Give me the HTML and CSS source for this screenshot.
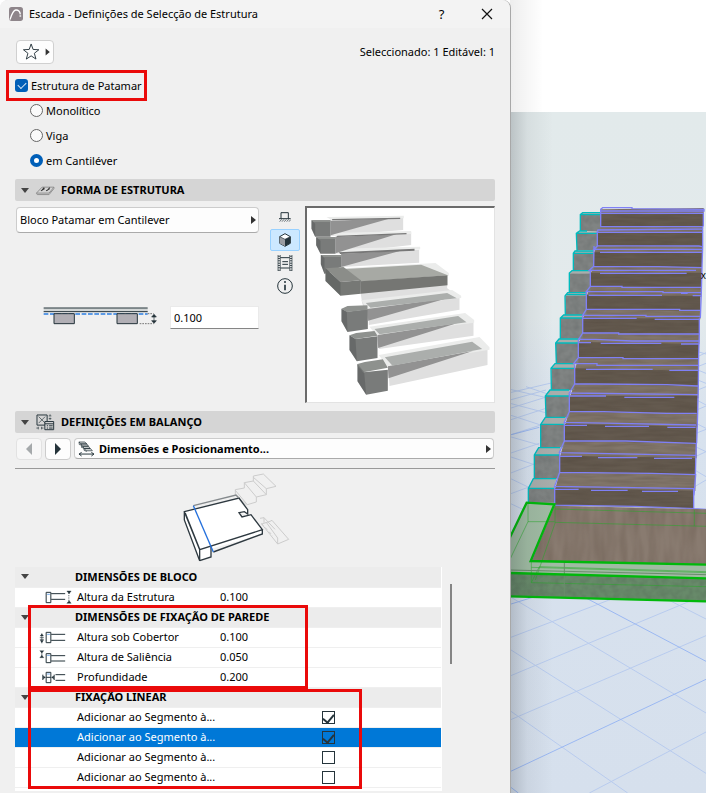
FILE: index.html
```html
<!DOCTYPE html>
<html lang="pt">
<head>
<meta charset="utf-8">
<title>Escada - Definições de Selecção de Estrutura</title>
<link rel="stylesheet" href="styles.css">
</head>
<body>
<main class="dialog">
  <header class="titlebar">
    <svg class="app-icon" viewBox="0 0 42 42"><rect width="42" height="42" rx="8" fill="#8e858a"/><path d="M3 38C7 25 12 10 20 9c8-1 13 5 14 13" fill="none" stroke="#fff" stroke-width="4"/><path d="M34 25v4" stroke="#fff" stroke-width="5"/></svg>
    <h1>Escada - Definições de Selecção de Estrutura</h1>
    <button class="win-btn" type="button" aria-label="Ajuda">?</button>
    <button class="win-btn" type="button" aria-label="Fechar"><svg viewBox="0 0 12 12" width="12" height="12"><path d="M1 1l10 10M11 1L1 11" stroke="#111" stroke-width="1.2"/></svg></button>
  </header>

  <div class="content">
    <div class="toolbar">
      <button class="fav" type="button" aria-label="Favoritos">
        <svg viewBox="0 0 112 66" width="36" height="22"><path d="M44 8l6 17 18 1-14 11 5 18-15-10-15 10 5-18-14-11 18-1z" fill="none" stroke="#2b3840" stroke-width="3" stroke-linejoin="round"/><path d="M89 22l13 11-13 11z" fill="#333"/></svg>
      </button>
      <span>Seleccionado: 1 Editável: 1</span>
    </div>

    <fieldset class="structure">
      <label class="choice marked"><input type="checkbox" checked>Estrutura de Patamar</label>
      <label class="choice sub"><input type="radio" name="tipo">Monolítico</label>
      <label class="choice sub"><input type="radio" name="tipo">Viga</label>
      <label class="choice sub"><input type="radio" name="tipo" checked>em Cantiléver</label>
    </fieldset>

    <h2 class="section">
      <i class="caret"></i>
      <svg viewBox="0 0 54 30"><path d="M4 22L19 6h32L38 22zM4 22l2 4h32l13-16V6" fill="none" stroke="#8b8b8b" stroke-width="2.5"/><path d="M16 16l10-6M30 16l10-6M19 14l6-7m8 8 7-8" stroke="#333" stroke-width="3"/></svg>
      FORMA DE ESTRUTURA
    </h2>

    <div class="form-area">
      <div class="form-left">
        <div class="picker">
          <select aria-label="Forma"><option>Bloco Patamar em Cantilever</option></select>
          <svg class="arrow" viewBox="0 0 5 8"><path d="M0 0l5 4-5 4z" fill="#333"/></svg>
        </div>
        <label class="thickness">
          <svg viewBox="130 395 345 60" width="115" height="20"><rect x="132" y="401" width="312" height="12" fill="#d2d6d6"/><path d="M132 401h312M132 412h312" stroke="#25343b" stroke-width="3"/><path d="M132 419h312" stroke="#2b7de1" stroke-width="4" stroke-dasharray="14 5"/><path d="M163 418h61v30h-61zM352 418h61v30h-61z" fill="#b1afb5" stroke="#25343b" stroke-width="3"/><path d="M444 418h18M420 448h42" stroke="#777" stroke-width="3" stroke-dasharray="5 3"/><path d="M463 422v22M456 428l7-8 7 8zM456 439l7 8 7-8z" fill="#25343b" stroke="#25343b" stroke-width="2"/></svg>
          <input type="text" value="0.100">
        </label>
      </div>
      <div class="views">
        <button type="button" aria-label="Planta"><svg viewBox="0 0 36 30" width="12" height="10"><path d="M6 20V2h22v18M0 20h35" fill="none" stroke="#25343b" stroke-width="3"/><path d="M2 29l6-7m1 7l6-7m1 7l6-7m1 7l6-7m1 7l5-6" stroke="#25343b" stroke-width="2"/></svg></button>
        <button class="on" type="button" aria-label="Vista 3D"><svg viewBox="0 0 36 42" width="12" height="14"><path d="M18 2l16 9v20L18 40 2 31V11z" fill="#fff" stroke="#25343b" stroke-width="3"/><path d="M2 11l16 8v21L2 31z" fill="#9b9da2"/><path d="M18 19l16-8v20l-16 9z" fill="#25343b"/><path d="M2 11l16 8 16-8" fill="none" stroke="#25343b" stroke-width="2"/></svg></button>
        <button type="button" aria-label="Animação"><svg viewBox="0 0 48 48" width="16" height="16"><path d="M3 0v48M10 0v48M38 0v48M45 0v48" stroke="#25343b" stroke-width="2"/><path d="M6 2v46M42 2v46" stroke="#25343b" stroke-width="5" stroke-dasharray="3 4"/><path d="M10 8h28M10 39h28M16 20h17M16 28h17" stroke="#25343b" stroke-width="3"/></svg></button>
        <button type="button" aria-label="Informação"><svg viewBox="0 0 48 48" width="16" height="16"><circle cx="24" cy="24" r="22" fill="none" stroke="#25343b" stroke-width="3"/><path d="M24 20v17" stroke="#25343b" stroke-width="5"/><circle cx="24" cy="12" r="3" fill="#25343b"/></svg></button>
      </div>
      <div class="preview">
        <svg viewBox="156 99 558 582" role="img" aria-label="Pré-visualização da escada">
          <path fill="#dfdfdf" d="M225 133L443 128V165L225 183zM240 182L467 172V210L240 236zM257 236L491 224V263L257 276zM315 352L575 329V340L612 366V404L338 437L320 385zM340 408L612 368V404L340 450zM368 482L654 439V482L370 522zM398 574L696 522V570L402 633z"/>
          <path fill="#ebeceb" d="M213 126L445 122V130L228 135zM228 174L467 168V177L242 185zM243 221L494 215V223L258 237zM262 280L540 264L580 294V302L315 320zM317 376L590 345L617 362V369L334 402zM342 455L629 414L656 435V443L362 480zM370 540L672 486L702 517V524L394 574z"/>
          <path fill="#929292" d="M225 138L406 130L225 181zM240 186L422 178L240 235zM257 237L436 227L257 276zM336 402L575 370L338 437zM366 480L606 444L368 519zM397 574L652 528L399 610z"/>
          <path fill="#abaeac" d="M331 384L575 354L604 370L345 398zM357 462L608 423L633 442L372 478zM388 547L650 500L680 522L411 572z"/>
          <path fill="#777" d="M230 132l204-4v4l-204 4zM246 182l207-8v4l-211 8zM250 232l227-11v6l-223 10z"/>
          <path fill="#a7a9a4" d="M268 282L497 269 577 301 316 320z"/>
          <path fill="#757673" d="M315 319L576 301V331L316 356z"/>
          <path fill="#797b7a" d="M168 136h57v49h-46l-11-24zM182 187h58v49h-45l-13-25zM196 240h61v35l-50 22-11-29zM258 401l16 9 63-7v59l-61 9-18-32zM282 481l18 11 66-8v65l-62 10-22-34zM306 567l18 25 73-8v63l-65 12-26-40z"/>
          <path fill="#8e918e" d="M168 136h57l-2 5h-50zM182 187h58v5h-51zM196 240h61v6h-52zM258 401l18-8 60-2v13l-62 7zM282 481l20-7 55-6 9 14-66 10zM306 567l22-6 54-8 15 25-73 14-18-18z"/>
          <path fill="#8b8d89" d="M210 280L264 276 316 316 255 321z"/>
          <path fill="#767875" d="M210 280L255 321V362L210 318zM255 321L316 316V356L255 362z"/>
          <path fill="#4e5150" opacity=".4" d="M168 136l11 10v39l-11-24zM182 187l13 10v39l-13-25zM196 240l11 10v47l-11-29zM258 401l16 9 2 61-18-32zM282 481l18 11 4 67-22-34zM306 567l20 24 6 68-26-40zM210 280l45 41v41l-45-44z"/>
        </svg>
      </div>
    </div>

    <h2 class="section">
      <i class="caret"></i>
      <svg viewBox="106 40 57 52" fill="none" stroke="#25343b" stroke-width="3"><path d="M134 74h-24V43h31v20M134 63h27v25h-27zM134 70h27"/><path d="M115 48l20 20m0-20l-20 20" stroke-width="2"/><path d="M140 76h4m3 0h11m-18 7h4m3 0h11"/><path d="M150 41v5m0 5v7m-4-12h8m-8 8h8M108 83h6m10 0h6m-16-4v8m10-8v8" stroke-width="2"/></svg>
      DEFINIÇÕES EM BALANÇO
    </h2>

    <div class="pager">
      <button class="off" type="button" disabled aria-label="Anterior"><svg viewBox="0 0 6 12" width="6" height="12"><path d="M6 0v12L0 6z" fill="#a5a9ab"/></svg></button>
      <button type="button" aria-label="Seguinte"><svg viewBox="0 0 6 12" width="6" height="12"><path d="M0 0v12l6-6z" fill="#25343b"/></svg></button>
      <div class="picker page">
        <select aria-label="Página"><option>Dimensões e Posicionamento...</option></select>
        <svg class="lead" viewBox="236 123 50 52"><path d="M240 166h42M246 161l-8 5 8 6M276 161l8 5-8 6" fill="none" stroke="#25343b" stroke-width="3"/><path d="M238 129h18l6 6h-18zM244 135h18l5 7h-18zM249 142h18l5 7h-18zM254 149h19l6 7h-19zM238 129l1 8 6 1 1 8 6 1 2 8 8 3" fill="#c9cdcf" stroke="#25343b" stroke-width="2"/></svg>
        <svg class="arrow" viewBox="0 0 5 8"><path d="M0 0l5 4-5 4z" fill="#333"/></svg>
      </div>
    </div>

    <div class="figure">
      <svg viewBox="543 210 333 291" width="111" height="97" role="img" aria-label="Bloco de patamar">
        <g fill="none" stroke="#ccc" stroke-width="3"><path d="M706 285v-16l27-5v-16l27-5v-15l30-6 38 37-29 7-39-34M799 266v18l-30 7-36-43M799 284l-39-41M769 291v15l-27 8-36-43M706 285l34 30M780 355l12-2 33 35M792 353v15M810 364l6-3 50 57-33 14-48-60 25-8M833 432v-18l-35-48"/><path d="M784 370l35 38" stroke-dasharray="9 8"/></g>
        <path d="M553 335L710 293 742 331 738 344 722 338 718 343 727 351 752 343 788 388V402L634 446V470L600 481 554 361z" fill="#fff"/>
        <g fill="none" stroke="#2e3940" stroke-width="4"><path d="M553 335L717 294 743 329V342L733 335 717 338 726 351 753 344 787 389 599 449zM553 335v25l46 122v-33M599 482l34-11v-31M787 389v13L640 456M556 340l43 108"/></g>
        <path d="M580 317L708 285l9 9" fill="none" stroke="#858a8d" stroke-width="4"/>
        <path d="M580 317L640 456" stroke="#2470dc" stroke-width="4"/>
      </svg>
    </div>

    <div class="params">
      <div class="list">
        <table>
          <colgroup><col class="c-icon"><col class="c-name"><col></colgroup>
          <tbody>
            <tr class="group"><td><i class="caret"></i></td><th colspan="2">DIMENSÕES DE BLOCO</th></tr>
            <tr><td class="ico"><svg viewBox="134 0 80 42"><path d="M137 7h14v31h-14zM152 11h42M152 28h42" fill="none" stroke="#25343b" stroke-width="3"/><path d="M140 13h8" stroke="#2b7de1" stroke-width="2"/><path d="M205 8v28" stroke="#25343b" stroke-width="2" stroke-dasharray="4 3"/><path d="M199 3h13l-6 8zM199 40h13l-6-8z" fill="#25343b" stroke="#25343b"/></svg></td><td>Altura da Estrutura</td><td>0.100</td></tr>
          </tbody>
          <tbody>
            <tr class="group"><td><i class="caret"></i></td><th colspan="2">DIMENSÕES DE FIXAÇÃO DE PAREDE</th></tr>
            <tr><td class="ico"><svg viewBox="116 0 80 42"><path d="M137 7h14v31h-14zM152 13h42M152 31h42" fill="none" stroke="#25343b" stroke-width="3"/><path d="M140 13h8" stroke="#2b7de1" stroke-width="2"/><path d="M118 22h12M118 28h12M124 10v30" stroke="#25343b" stroke-width="2"/><path d="M118 18h12l-6-7zM118 31h12l-6 7z" fill="#25343b"/></svg></td><td>Altura sob Cobertor</td><td>0.100</td></tr>
            <tr><td class="ico"><svg viewBox="116 0 80 42"><path d="M137 11h14v27h-14zM152 17h42M152 33h42" fill="none" stroke="#25343b" stroke-width="3"/><path d="M140 16h8" stroke="#2b7de1" stroke-width="2"/><path d="M118 2h12l-6 7zM118 23h12l-6-7z" fill="#25343b" stroke="#25343b"/><path d="M124 5v16" stroke="#25343b" stroke-width="2"/></svg></td><td>Altura de Saliência</td><td>0.050</td></tr>
            <tr><td class="ico"><svg viewBox="116 0 80 42"><path d="M137 7h14v31h-14zM165 14h29M165 31h29M137 22h14" fill="none" stroke="#25343b" stroke-width="3"/><path d="M140 12h8" stroke="#2b7de1" stroke-width="2"/><path d="M127 14v16M161 14v16" stroke="#25343b" stroke-width="3"/><path d="M128 17v11l8-6zM160 17v11l-8-6z" fill="#25343b"/></svg></td><td>Profundidade</td><td>0.200</td></tr>
          </tbody>
          <tbody>
            <tr class="group"><td><i class="caret"></i></td><th colspan="2">FIXAÇÃO LINEAR</th></tr>
            <tr><td></td><td><label for="s1">Adicionar ao Segmento à...</label></td><td class="chk"><input id="s1" type="checkbox" checked></td></tr>
            <tr class="selected"><td></td><td><label for="s2">Adicionar ao Segmento à...</label></td><td class="chk"><input id="s2" type="checkbox" checked></td></tr>
            <tr><td></td><td><label for="s3">Adicionar ao Segmento à...</label></td><td class="chk"><input id="s3" type="checkbox"></td></tr>
            <tr><td></td><td><label for="s4">Adicionar ao Segmento à...</label></td><td class="chk"><input id="s4" type="checkbox"></td></tr>
          </tbody>
        </table>
        <div class="mark mark-wall"></div>
        <div class="mark mark-linear"></div>
      </div>
      <div class="scroll"></div>
    </div>
  </div>
</main>

<aside class="viewport">
  <svg viewBox="12 -570 588 2379" preserveAspectRatio="xMinYMin slice" role="img" aria-label="Vista 3D da escada">
    <defs>
      <linearGradient id="ground" x1="0" y1="0" x2="0" y2="1"><stop offset="0" stop-color="#e2eaeb"/><stop offset=".3" stop-color="#e3eaec"/><stop offset=".45" stop-color="#d8e2ee"/><stop offset="1" stop-color="#d6e0ed"/></linearGradient>
      <linearGradient id="shade"><stop offset="0" stop-color="#1a2028" stop-opacity=".2"/><stop offset=".4" stop-color="#1a2028" stop-opacity=".06"/><stop offset="1" stop-color="#1a2028" stop-opacity="0"/></linearGradient>
      <linearGradient id="shade-top"><stop offset="0" stop-opacity=".07"/><stop offset="1" stop-opacity="0"/></linearGradient>
      <filter id="grain" x="0" y="0" width="1" height="1" color-interpolation-filters="sRGB"><feTurbulence type="fractalNoise" baseFrequency=".012 .1" numOctaves="2" seed="4"/><feColorMatrix values="0 0 0 0 .25  0 0 0 0 .21  0 0 0 0 .17  .4 0 0 0 -.12"/><feComposite in2="SourceGraphic" operator="in"/><feMerge><feMergeNode in="SourceGraphic"/><feMergeNode/></feMerge></filter>
      <filter id="planks" x="0" y="0" width="1" height="1" color-interpolation-filters="sRGB"><feTurbulence type="fractalNoise" baseFrequency=".04 .008" numOctaves="2" seed="2"/><feColorMatrix values="0 0 0 0 .28  0 0 0 0 .22  0 0 0 0 .17  .4 0 0 0 -.12"/><feComposite in2="SourceGraphic" operator="in"/><feMerge><feMergeNode in="SourceGraphic"/><feMergeNode/></feMerge></filter>
      <filter id="stone" x="0" y="0" width="1" height="1" color-interpolation-filters="sRGB"><feTurbulence type="fractalNoise" baseFrequency=".05" numOctaves="2" seed="8"/><feColorMatrix values="0 0 0 0 .2  0 0 0 0 .22  0 0 0 0 .22  .3 0 0 0 -.1"/><feComposite in2="SourceGraphic" operator="in"/><feMerge><feMergeNode in="SourceGraphic"/><feMergeNode/></feMerge></filter>
    </defs>
    <rect x="12" y="-570" width="588" height="336" fill="#fff"/>
    <rect x="12" y="-234" width="588" height="2050" fill="url(#ground)"/>
    <g fill="none" stroke="#b8cbee" stroke-width="3">
      <path d="M12 608L140 578M12 630L120 600M12 598L130 625M12 655L118 622M60 590L125 612M12 690L120 655M12 640L118 668M12 735L120 700M12 675L104 705M12 790L100 760M12 740L100 765M12 850L95 818M12 800L88 825M12 912L85 885M12 865L85 900M12 940L65 965M575 485L600 492M575 500L600 488M575 530L600 520M575 540L600 550M575 600L600 590M575 570L600 580M572 660L600 648M572 630L600 645M570 730L600 718M570 700L600 715M568 800L600 785M568 770L600 785M566 890L600 870M566 840L600 860"/>
      <path d="M12 1343L320 1226M12 1458L560 1230M12 1590L600 1337M250 1809L600 1626M12 1220L600 1569M12 1378L600 1750M12 1562L365 1809M480 1226L600 1287"/>
    </g>
    <path d="M12 1745L600 1468M240 1224L600 1414M12 1243L80 1222M12 1790l25 19M12 735L100 712" fill="none" stroke="#9bb8f2" stroke-width="3"/>

    <path filter="url(#grain)" fill="#82766a" d="M284 58L593 54V70H284zM284 109L590 108V130H274zM275 166L590 168V190H263zM263 228L588 231V253H253zM253 288L586 290V320H241zM241 357L583 360V388H230zM230 428L580 431V462H217zM217 502L579 506V542H206zM206 581L577 586V625H190zM190 664L575 668V712H175zM175 752L572 758V805H161zM161 846L568 851V903H146z"/>
    <path filter="url(#grain)" fill="#645a4f" d="M284 70L592 69V109L284 110zM274 127L590 127V169L274 167zM263 187L588 187V232L263 229zM253 248L586 248V292L253 290zM241 315L583 318V362L241 358zM230 383L580 386V433L230 429zM217 456L579 462V508L217 503zM206 535L577 542V588L206 582zM190 618L575 618V670L190 665zM175 702L572 710V760L175 753zM161 797L568 804V853L161 847zM146 893L564 902V955L146 946z"/>
    <path filter="url(#stone)" fill="#808483" d="M223 74h61v49h-61zM213 130h61v51h-61zM202 190h61v51h-61zM190 250h63v57h-63zM178 316h63v59h-63zM163 384h67v62h-67zM150 459h67v61h-67zM136 535h69v65h-69zM120 618h70v64h-70zM104 703h71v69h-71zM85 795h75v71h-75zM67 895h78v45h-78z"/>
    <path fill="#a9adab" d="M223 74l6-6h55v6zM213 130v-5l60-2v7zM202 190l4-8h57v8zM190 250l6-8h57v8zM176 318l8-10h57v8zM163 384l9-10h58v10zM150 459l8-12h59v12zM136 535l10-14h62v14zM118 618l12-18h61v18zM104 703l13-21h63l-5 21zM85 795l13-22h66l-4 22zM67 895l14-29h70l-6 29z"/>
    <path fill="none" stroke="#00babd" stroke-width="4" d="M284 68h-54l-7 6v49M284 74h-61M243 123h-22l-10 7 2 51M213 130h61M263 183h-56l-5 7v51M263 190h-60M253 242h-55l-8 7v58M241 308h-56l-8 10 1 57M178 314h63M230 375h-57l-10 9v62M163 384h67M217 447h-58l-10 12 2 61M150 459h67M205 521h-58l-12 14 1 65M136 535h69M190 600h-58l-14 18 2 64M118 618h72M178 682h-60l-14 21v69M104 703h71M163 773h-65l-13 22v71M85 795h76M150 866h-68l-15 29v45M67 895h79"/>
    <path fill="none" stroke="#7f80f5" stroke-width="4" d="M284 110V58l6-5h88v3l216 2v5H284M284 70h308v39M284 110h306v7l-314 3-3 7h316M274 127v40l305 1 9 2M264 168l-1 61M590 110v60l-2 62M275 167l-11 11h324M282 187h305M263 229l193 1 132 3M263 229l-13 12h320M253 241v48M588 232l-2 76M282 250h260M253 289h95v3h238M253 289l-12 16h230v3h115M241 305v53M586 308l-3 76M248 316h220M525 310h20M560 317h24M241 358h280v3h62M241 358l-11 18h190v3h162M230 376v53M580 385v48l-2 60M230 385h162M446 388h134M230 429h108v3h240M230 429l-12 19h50l110 5h200M217 450v54M284 460h182M217 458h38M525 462h54M217 503h134v3h226M578 493l-1 95M217 503l-14 18h70v5h304M206 525v57M240 538h200M490 541h87M206 582h64l213 2 92 4M577 588l-2 82M206 582l-16 27 385 5M190 609v56M190 618h110M355 622h150M190 665h102l190 5h90M575 670l-3 90M190 665l-15 32 160 3 235 5M175 697v56M175 706h68M297 709h132M484 712h85M175 753h185l209 7M571 760l-3 95M175 753l-15 35 410 8M161 788v59M161 799h67M276 803h118M444 805h114M161 847l276 3 132 4-5 62M161 847l-15 42 420 7M146 889v57M146 898h72M255 901h110M408 904h108M146 946h60l180 3 178 7 36 2M563 896v60"/>
    <text class="cursor-x" x="584" y="268">x</text>

    <path filter="url(#planks)" fill="#897b70" d="M146 947L600 958V1123L76 1112z"/>
    <path fill="#a0bba3" d="M62 938h83L76 1112 600 1123V1166L12 1150V1042z"/>
    <path filter="url(#stone)" fill="#688a6a" d="M12 1149L600 1166V1233L12 1218z"/>
    <path fill="none" stroke="#28a82a" stroke-width="2" opacity=".8" d="M147 957L600 970M147 997L600 1009M147 940v60L88 1170M66 938v57h80M12 1108L66 995M565 960v48M76 1112v66L600 1190M76 1178L100 1130 600 1145M76 1132L600 1148"/>
    <path fill="none" stroke="#698c6b" stroke-width="3" d="M12 1140L600 1154M175 1115v104"/>
    <path d="M145 942L78 1110" stroke="#7380ee" stroke-width="3" stroke-dasharray="5 4"/>
    <path fill="none" stroke="#00b80b" stroke-width="7" d="M12 1042L62 938 145 943 74 1113 600 1124M12 1149L600 1165M12 1219L600 1234"/>
    <rect x="12" y="-234" width="130" height="2050" fill="url(#shade)"/>
    <rect x="12" y="-570" width="100" height="336" fill="url(#shade-top)"/>
  </svg>
</aside>
</body>
</html>
```
FILE: styles.css
```css
* { box-sizing: border-box; }

body {
  margin: 0;
  display: grid;
  grid-template-columns: minmax(0, 1fr) 196px;
  min-height: 100vh;
  background: #fff;
  color: #000;
  font: 11px/16px "Noto Sans", "Open Sans", sans-serif;
}

button, input, select { font: inherit; color: inherit; margin: 0; padding: 0; }
svg { display: block; }

.dialog {
  background: #f0f0f0;
  border-radius: 8px 8px 0 0;
  box-shadow: 1px 0 0 #a8a8a8;
  z-index: 1;
}

.titlebar {
  display: flex;
  align-items: center;
  height: 28px;
  padding: 0 1px 0 9px;
  background: #f3f3f3;
  border-radius: 8px 8px 0 0;
}
.app-icon { width: 14px; height: 14px; margin-right: 6px; }
.titlebar h1 {
  flex: 1;
  margin: 0;
  font-size: 11px;
  font-weight: 400;
}
.win-btn {
  display: grid;
  place-items: center;
  width: 45px;
  height: 28px;
  border: 0;
  background: none;
  font-size: 13px;
}

.content { padding: 12px 15px 0; }

.toolbar { display: flex; justify-content: space-between; align-items: center; }
.fav {
  height: 24px;
  padding: 0;
  margin-left: 1px;
  background: #fdfdfd;
  border: 1px solid #d0d0d0;
  border-radius: 4px;
}

.structure {
  display: flex;
  flex-direction: column;
  align-items: flex-start;
  margin: 6px 0 6px -9px;
  padding: 0;
  border: 0;
}
.choice { display: flex; align-items: center; gap: 3px; height: 25px; }
.choice input {
  appearance: none;
  width: 13px;
  height: 13px;
  border: 1px solid #666;
  border-radius: 50%;
  background: #fafafa;
}
.choice.sub { padding-left: 24px; }
.choice.marked {
  height: 31px;
  margin-bottom: -3px;
  padding: 0 2px 0 6px;
  border: 3px solid #ea0a0a;
}
.choice.marked input {
  border: 0;
  border-radius: 3px;
  background: #005fb8;
  display: grid;
  place-items: center;
}
.choice.marked input::after {
  content: "";
  width: 7px;
  height: 4px;
  margin-bottom: 2px;
  border: solid #d8e8f6;
  border-width: 0 0 1px 1px;
  transform: rotate(-45deg);
}
.choice.sub input:checked { border: 4px solid #005fb8; background: #fff; }

.section {
  display: flex;
  align-items: center;
  gap: 6px;
  height: 22px;
  margin: 0 0 5px;
  padding: 0 6px;
  background: #d5d5d5;
  border-radius: 2px;
  font-size: 11px;
  line-height: 16px;
}
.section svg { width: 20px; height: 17px; }
.caret {
  display: block;
  flex: none;
  width: 0;
  border: 4px solid transparent;
  border-top: 5px solid #444;
  border-bottom: 0;
}

.form-area { display: flex; gap: 11px; align-items: flex-start; margin-bottom: 8px; }
.form-left { flex: 1; padding: 1px 0 0 1px; }
.picker { position: relative; flex: 1; }
.picker select {
  display: block;
  appearance: none;
  width: 100%;
  height: 26px;
  padding: 0 14px 0 3px;
  background: #fdfdfd;
  border: 1px solid #ccc;
  border-bottom-color: #aaa;
  border-radius: 4px;
}
.arrow { position: absolute; right: 3px; top: 50%; width: 5px; height: 8px; margin-top: -4px; }

.thickness { display: flex; justify-content: space-between; padding-left: 27px; margin-top: 73px; }
.thickness input {
  width: 89px;
  height: 23px;
  padding: 0 3px;
  background: #fff;
  border: 1px solid #eaeaea;
  border-bottom-color: #858585;
}

.views { display: flex; flex-direction: column; width: 30px; gap: 1px; }
.views button {
  display: grid;
  place-items: center;
  height: 22px;
  border: 1px solid transparent;
  border-radius: 2px;
  background: none;
}
.views .on { background: #cce8ff; border-color: #99d1ff; }

.preview {
  flex: 0 0 190px;
  margin-left: -6px;
  border: solid #6b6b6b;
  border-width: 2px 1px 1px 2px;
  border-right-color: #e3e3e3;
  border-bottom-color: #e3e3e3;
  background: #fff;
}
.preview svg { width: 100%; height: 194px; }

.pager { display: flex; gap: 3px; padding: 0 1px 8px; border-bottom: 1px solid #999; }
.pager button {
  display: grid;
  place-items: center;
  width: 26px;
  height: 22px;
  background: #fdfdfd;
  border: 1px solid #ccc;
  border-radius: 4px;
}
.pager .off { background: #f7f7f7; border-color: #e2e2e2; }
.page select { height: 21px; padding-left: 24px; font-weight: 700; }
.lead { position: absolute; left: 4px; top: 2px; width: 17px; height: 17px; }

.figure { display: flex; justify-content: center; padding: 1px 38px 0 0; }

.params { display: flex; gap: 8px; }
.list { position: relative; flex: 1; background: #fff; padding: 0 1px 3px 0; }
.scroll { width: 2px; height: 80px; margin: 17px 43px 0 0; background: #858585; }

table { width: 100%; border-collapse: collapse; table-layout: fixed; }
.c-icon { width: 60px; }
.c-name { width: 145px; }
tr { height: 20px; border-bottom: 1px solid #efefef; }
td, th { padding: 0; line-height: 16px; text-align: left; white-space: nowrap; }
td:nth-child(2) { padding-left: 2px; }
.group { background: #ececec; }
.group .caret { margin-left: 6px; }
.ico svg { width: 27px; height: 14px; margin-left: 24px; }
tbody:first-of-type .ico svg { margin-left: 30px; }
.selected { background: #0078d7; color: #fff; }
.chk input {
  display: grid;
  place-items: center;
  appearance: none;
  width: 13px;
  height: 13px;
  margin-left: 102px;
  border: 1px solid #25343b;
  background: #fff;
}
.selected .chk input { background: transparent; }
.chk input:checked::after {
  content: "";
  width: 5px;
  height: 9px;
  margin-bottom: 2px;
  border: solid #25343b;
  border-width: 0 2px 2px 0;
  transform: rotate(40deg);
}

.mark { position: absolute; left: 13px; border: 3px solid #ea0a0a; pointer-events: none; }
.mark-wall { top: 38px; width: 280px; height: 84px; }
.mark-linear { top: 122px; width: 334px; height: 100px; }

.viewport { min-width: 0; overflow: hidden; }
.viewport svg { width: 100%; height: 100%; }
.cursor-x { font: 30px "Open Sans", sans-serif; }
```
